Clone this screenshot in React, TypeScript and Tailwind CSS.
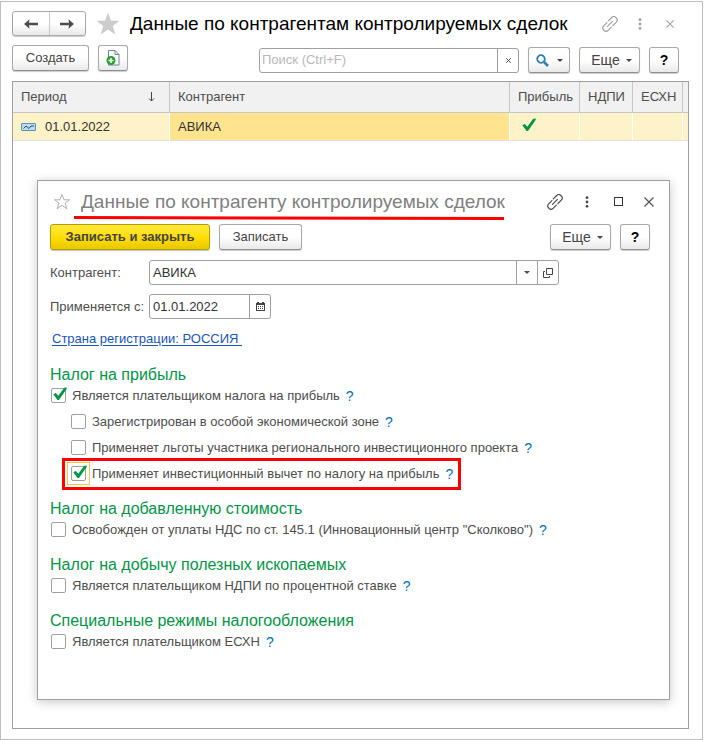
import React, { useState } from 'react';

const SANS = "font-['Liberation_Sans',Arial,sans-serif]";

const BTN =
  'flex items-center justify-center h-[26px] rounded-[3px] border border-[#a9a9a9] border-b-[#8f8f8f] bg-linear-to-b from-white from-50% to-[#e9e9e9] text-[#444444] shadow-[0_1px_1px_rgba(0,0,0,0.2)]';

const LinkIcon = () => (
  <svg width="16" height="16" viewBox="0 0 16 16" fill="none" stroke="currentColor" strokeWidth="1.2" strokeLinecap="round">
    <path d="M6.300 4.900 9.700 1.500a2.900 2.900 0 0 1 4.100 0l.5.5a2.900 2.900 0 0 1 0 4.100L10.900 9.500" />
    <path d="M9.300 11.100 6.100 14.300a2.900 2.900 0 0 1-4.100 0l-.3-.3a2.900 2.900 0 0 1 0-4.100L4.900 6.700" />
    <path d="m5.500 10.300 4.900-4.900" />
  </svg>
);

const DotsIcon = () => (
  <svg width="4" height="12" viewBox="0 0 4 12" fill="currentColor">
    <circle cx="2" cy="1.700" r="1.400" />
    <circle cx="2" cy="6" r="1.400" />
    <circle cx="2" cy="10.300" r="1.400" />
  </svg>
);

const CrossIcon = ({ size, width = 1.1 }: { size: number; width?: number }) => (
  <svg width={size} height={size} viewBox="0 0 10 10" fill="none" stroke="currentColor" strokeWidth={width}>
    <path d="m.5.5 9 9M9.5.5l-9 9" />
  </svg>
);

const Caret = () => (
  <svg width="6" height="3" viewBox="0 0 6 3" fill="currentColor">
    <path d="M0 0h6L3 3z" />
  </svg>
);

const CheckMark = ({ className }: { className?: string }) => (
  <svg width="14" height="14" viewBox="0 0 14 14" fill="#009646" className={className}>
    <path d="M.3 7.300 2.800 5.900 5.300 8.800 11.200.8 13.800.5 13.600 1.900 6 13 4.600 13z" />
  </svg>
);

const Arrow = ({ className }: { className?: string }) => (
  <svg width="14" height="10" viewBox="0 0 14 10" fill="#4d4d4d" className={className}>
    <path d="M0 5 5.500.2 5 3.800h9v2.400H5l.5 3.600z" />
  </svg>
);

interface CheckRowProps {
  id: string;
  label: string;
  checked?: boolean;
  nested?: boolean;
  highlighted?: boolean;
}

const CheckRow: React.FC<CheckRowProps> = ({ id, label, checked = false, nested, highlighted }) => {
  const [value, setValue] = useState(checked);

  return (
    <div className={`relative flex items-center w-fit h-[25px] ${nested ? 'ml-[21px]' : 'ml-px'}`}>
      <span className="relative flex size-[15px] shrink-0">
        <input
          id={id}
          type="checkbox"
          checked={value}
          onChange={(e) => setValue(e.target.checked)}
          className="appearance-none size-[15px] rounded-[2px] border border-[#a0a0a0] bg-white"
        />
        {value && <CheckMark className="absolute left-0.5 -top-px pointer-events-none" />}
        {highlighted && <span className="absolute -inset-1 border border-[#f5c842] pointer-events-none" />}
      </span>
      <label htmlFor={id} className="ml-1.5 whitespace-nowrap">{label}</label>
      <button type="button" aria-label="Справка" className="ml-1.5 text-sm text-[#0071bc]">?</button>
      {highlighted && (
        <span className="absolute -top-[3px] -bottom-1 -left-[9px] -right-2 border-3 border-[#ff0000] pointer-events-none" />
      )}
    </div>
  );
};

const Section: React.FC<{ title: string; children: React.ReactNode }> = ({ title, children }) => (
  <section>
    <h2 className="h-5 text-base leading-6 text-[#009646]">{title}</h2>
    <div className="flex flex-col gap-px">{children}</div>
  </section>
);

const CounterpartyForm = () => (
  <div className="ml-6 mr-[18px] mt-[39px] border border-[#a0a0a0] bg-white pl-3 pr-[19px] pb-[45px] shadow-[0_2px_10px_rgba(0,0,0,0.22)]">
    {/* Заголовок формы */}
    <div className="flex items-center h-[41px] mb-0.5">
      <svg width="18" height="18" viewBox="0 0 18 18" fill="none" stroke="#b0b0b0" className="ml-[3px] shrink-0">
        <path d="m9 1.500 2 5.300h5.600l-4.500 3.400 1.700 5.500L9 12.400l-4.800 3.300 1.700-5.500L1.400 6.800H7z" />
      </svg>
      <div className="relative ml-2.5">
        <h1 className="text-[19px] leading-6 text-[#808080] whitespace-nowrap">Данные по контрагенту контролируемых сделок</h1>
        <svg className="absolute -left-[7px] top-[26px] w-[430px] h-1" viewBox="0 0 430 4" preserveAspectRatio="none">
          <path d="M0 1.500 430 2.500" stroke="#ff0000" strokeWidth="3" />
        </svg>
      </div>
      <div className="flex items-center ml-auto text-[#4d4d4d]">
        <button type="button" aria-label="Получить ссылку" className="mr-[22px]"><LinkIcon /></button>
        <button type="button" aria-label="Меню" className="mr-[25px]"><DotsIcon /></button>
        <button type="button" aria-label="Развернуть" className="mr-[21px] size-[9px] border border-[#333333]" />
        <button type="button" aria-label="Закрыть" className="-mr-1"><CrossIcon size={10} /></button>
      </div>
    </div>

    <div className="flex items-center">
      <button type="button" className="h-[26px] w-40 rounded-[3px] border border-[#b39b00] bg-linear-to-b from-[#ffe838] via-[#ffdf00] to-[#e8c800] font-bold text-[#444444] shadow-[0_1px_1px_rgba(0,0,0,0.25)]">
        Записать и закрыть
      </button>
      <button type="button" className={`${BTN} ml-[9px] w-[83px]`}>Записать</button>
      <button type="button" className={`${BTN} ml-auto w-[61px] gap-1.5 pl-1 text-sm`}>Еще <Caret /></button>
      <button type="button" className={`${BTN} ml-[9px] w-[30px] text-sm font-bold text-black`}>?</button>
    </div>

    {/* Реквизиты */}
    <div className="mt-2.5 flex items-center">
      <label htmlFor="counterparty" className="w-[99px] shrink-0">Контрагент:</label>
      <div className="flex grow mr-[91px] h-[25px] rounded-[3px] border border-[#a0a0a0]">
        <input id="counterparty" defaultValue="АВИКА" className="grow min-w-0 px-[3px] text-[#333333] outline-none" />
        <button type="button" aria-label="Выбрать" className="flex items-center justify-center w-[21px] border-l border-[#a0a0a0]"><Caret /></button>
        <button type="button" aria-label="Открыть" className="flex items-center justify-center w-[21px] border-l border-[#a0a0a0]">
          <svg width="10" height="10" viewBox="0 0 10 10" fill="none" stroke="#444444">
            <path d="M3.500.5h6v6h-6zM2 3.500H.5v6h6V8" />
          </svg>
        </button>
      </div>
    </div>
    <div className="mt-[9px] flex items-center">
      <label htmlFor="since" className="w-[99px] shrink-0">Применяется с:</label>
      <div className="flex w-[122px] h-[25px] rounded-[3px] border border-[#a0a0a0]">
        <input id="since" defaultValue="01.01.2022" className="grow min-w-0 px-[3px] text-[#333333] outline-none" />
        <button type="button" aria-label="Календарь" className="flex items-center justify-center w-[21px] shrink-0 border-l border-[#a0a0a0]">
          <svg width="9" height="9" viewBox="0 0 9 9" fill="#444444" shapeRendering="crispEdges">
            <path d="M1 0h2v1h3V0h2v1h1v8H0V1h1zm0 3v5h7V3z" fillRule="evenodd" />
            <path d="M2 4h1v1H2zm2 0h1v1H4zm2 0h1v1H6zM2 6h1v1H2zm2 0h1v1H4zm2 0h1v1H6z" />
          </svg>
        </button>
      </div>
    </div>
    <div className="mt-2.5 h-5 leading-5">
      <a href="#" className="ml-0.5 text-[#1a55b8] underline underline-offset-2 whitespace-pre">{'Страна регистрации: РОССИЯ '}</a>
    </div>

    {/* Налоги */}
    <div className="mt-3.5 flex flex-col gap-[11px]">
      <Section title="Налог на прибыль">
        <CheckRow id="profit" label="Является плательщиком налога на прибыль" checked />
        <CheckRow id="zone" label="Зарегистрирован в особой экономической зоне" nested />
        <CheckRow id="project" label="Применяет льготы участника регионального инвестиционного проекта" nested />
        <CheckRow id="deduction" label="Применяет инвестиционный вычет по налогу на прибыль" checked nested highlighted />
      </Section>
      <Section title="Налог на добавленную стоимость">
        <CheckRow id="vat" label={'Освобожден от уплаты НДС по ст. 145.1 (Инновационный центр "Сколково")'} />
      </Section>
      <Section title="Налог на добычу полезных ископаемых">
        <CheckRow id="ndpi" label="Является плательщиком НДПИ по процентной ставке" />
      </Section>
      <Section title="Специальные режимы налогообложения">
        <CheckRow id="eshn" label="Является плательщиком ЕСХН" />
      </Section>
    </div>
  </div>
);

const TH = 'border-r border-b border-[#c6c6c6] px-2 text-left font-normal';
const TD = 'border-r border-b border-r-white border-b-[#e0e0e0] px-2';

export default function App() {
  return (
    <div className="bg-white pt-px pr-px">
      <main className={`${SANS} border border-[#bdbdbd] pt-[9px] pl-[11px] pr-[13px] pb-2.5 text-[13px] text-[#4d4d4d]`}>
        {/* Заголовок списка */}
        <header className="flex items-center h-[25px]">
          <div className="flex h-[25px] w-[74px] shrink-0 rounded-[3px] border border-[#a9a9a9] bg-linear-to-b from-white from-50% to-[#e9e9e9] shadow-[0_1px_1px_rgba(0,0,0,0.2)]">
            <button type="button" aria-label="Назад" className="flex flex-1 items-center justify-center border-r border-[#c6c6c6]"><Arrow /></button>
            <button type="button" aria-label="Вперед" className="flex flex-1 items-center justify-center"><Arrow className="rotate-180" /></button>
          </div>
          <svg width="24" height="24" viewBox="0 0 24 24" fill="#cccccc" className="ml-2.5 shrink-0">
            <path d="m12 .5 3 8.300h8.500l-6.700 5.200 2.500 8.500L12 17.500l-7.300 5L7.200 14 .5 8.800H9z" />
          </svg>
          <h1 className="ml-2.5 text-[19px] leading-6 text-black whitespace-nowrap">Данные по контрагентам контролируемых сделок</h1>
          <div className="flex items-center ml-auto mr-[3px] text-[#a0a0a0]">
            <button type="button" aria-label="Получить ссылку" className="mr-5"><LinkIcon /></button>
            <button type="button" aria-label="Меню" className="mr-6"><DotsIcon /></button>
            <button type="button" aria-label="Закрыть" className="mr-3"><CrossIcon size={8} width={1.3} /></button>
          </div>
        </header>

        <div className="mt-[7px] flex items-center">
          <button type="button" className={`${BTN} w-[77px]`}>Создать</button>
          <button type="button" aria-label="Создать копированием" className={`${BTN} ml-[9px] w-[30px]`}>
            <svg width="14" height="16" viewBox="0 0 14 16" fill="none">
              <path d="M2.500.5h6.500l4 4v10.500h-10.500zM9 .5v4h4" fill="#fff" stroke="#6b8299" />
              <circle cx="5" cy="10.500" r="4.500" fill="#27a030" />
              <path d="M5 8v5M2.500 10.500h5" stroke="#fff" strokeWidth="1.500" />
            </svg>
          </button>
          <div className="ml-auto mt-1 mr-2.5 flex items-center">
            <div className="flex w-[260px] h-[25px] rounded-[3px] border border-[#a0a0a0]">
              <input aria-label="Поиск" placeholder="Поиск (Ctrl+F)" className="grow min-w-0 px-0.5 placeholder:text-[#b8b8b8] outline-none" />
              <button type="button" aria-label="Очистить" className="flex items-center justify-center w-[21px] border-l border-[#a0a0a0]"><CrossIcon size={5} width={2} /></button>
            </div>
            <button type="button" aria-label="Найти" className={`${BTN} ml-[9px] w-[42px] gap-2`}>
              <svg width="13" height="13" viewBox="0 0 13 13" fill="none" stroke="#2f7cb5">
                <circle cx="5" cy="5" r="3.800" strokeWidth="1.800" />
                <path d="m8 8 4 4" strokeWidth="2.500" />
              </svg>
              <Caret />
            </button>
            <button type="button" className={`${BTN} ml-[9px] w-[61px] gap-1.5 pl-1 text-sm`}>Еще <Caret /></button>
            <button type="button" className={`${BTN} ml-[9px] w-[30px] text-sm font-bold text-black`}>?</button>
          </div>
        </div>

        {/* Список */}
        <div className="mt-2 border border-[#a0a0a0] pb-7">
          <table className="w-full table-fixed border-separate border-spacing-0">
            <colgroup>
              <col className="w-[157px]" />
              <col />
              <col className="w-[70px]" />
              <col className="w-[53px]" />
              <col className="w-[50px]" />
              <col className="w-[5px]" />
            </colgroup>
            <thead>
              <tr className="h-[31px] bg-[#f1f1f1]">
                <th className={TH}>
                  <div className="flex items-center justify-between">
                    Период
                    <svg width="7" height="10" viewBox="0 0 7 10" fill="none" stroke="#444444" className="mr-1.5">
                      <path d="M3.500 0v9M1 6.500l2.500 2.500L6 6.500" />
                    </svg>
                  </div>
                </th>
                <th className={TH}>Контрагент</th>
                <th className={TH}>Прибыль</th>
                <th className={TH}>НДПИ</th>
                <th className={TH}>ЕСХН</th>
                <th className="border-b border-[#c6c6c6]" />
              </tr>
            </thead>
            <tbody>
              <tr className="h-[28px] bg-[#fef2c8] text-[#333333]">
                <td className={TD}>
                  <div className="flex items-center gap-[9px]">
                    <svg width="15" height="8" viewBox="0 0 15 8" fill="none">
                      <rect x=".5" y=".5" width="14" height="7" rx=".5" fill="#bcdcf2" stroke="#5b8fb5" />
                      <path d="M2.500 5.500 5 3l3 2.500L10 3h3" stroke="#24506f" />
                    </svg>
                    01.01.2022
                  </div>
                </td>
                <td className={`${TD} bg-[#ffe48f]`}>АВИКА</td>
                <td className={`${TD} pb-1`}><CheckMark className="ml-1" /></td>
                <td className={TD} />
                <td className={TD} />
                <td className="border-b border-[#e0e0e0]" />
              </tr>
            </tbody>
          </table>

          <CounterpartyForm />
        </div>
      </main>
    </div>
  );
}
